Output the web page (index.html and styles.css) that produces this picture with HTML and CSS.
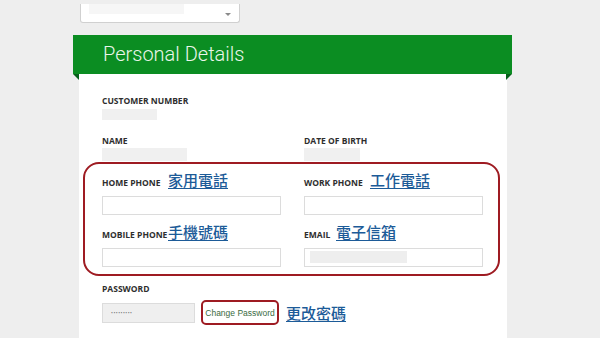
FILE: index.html
```html
<!DOCTYPE html>
<html lang="zh-Hant">
<head>
    <meta charset="UTF-8">
    <title>Personal Details</title>
    <link rel="stylesheet" href="styles.css">
</head>
<body>
    <div class="page">
        <div class="select"><span class="select-fill"></span></div>

        <div class="banner">
            <h1 class="banner-title">Personal Details</h1>
        </div>

        <div class="card">
            <div class="field">
                <div class="label">CUSTOMER NUMBER</div>
                <div class="blank blank-short"></div>
            </div>

            <div class="pair">
                <div class="field">
                    <div class="label">NAME</div>
                    <div class="blank blank-name"></div>
                </div>
                <div class="field">
                    <div class="label">DATE OF BIRTH</div>
                    <div class="blank blank-dob"></div>
                </div>
            </div>

            <!-- annotated block -->
            <div class="mark-box">
                <div class="pair">
                    <div class="field">
                        <div class="label-row">
                            <span class="label label-wide">HOME PHONE</span>
                            <a class="note" href="#">家用電話</a>
                        </div>
                        <div class="input"></div>
                    </div>
                    <div class="field">
                        <div class="label-row">
                            <span class="label label-wide">WORK PHONE</span>
                            <a class="note" href="#">工作電話</a>
                        </div>
                        <div class="input"></div>
                    </div>
                </div>
                <div class="pair pair-second">
                    <div class="field">
                        <div class="label-row">
                            <span class="label label-wide">MOBILE PHONE</span>
                            <a class="note" href="#">手機號碼</a>
                        </div>
                        <div class="input"></div>
                    </div>
                    <div class="field">
                        <div class="label-row">
                            <span class="label label-email">EMAIL</span>
                            <a class="note" href="#">電子信箱</a>
                        </div>
                        <div class="input"><span class="input-fill"></span></div>
                    </div>
                </div>
            </div>

            <div class="field field-password">
                <div class="label">PASSWORD</div>
                <div class="password-row">
                    <div class="input input-password">•••••••••</div>
                    <button class="change-btn">Change Password</button>
                    <a class="note" href="#">更改密碼</a>
                </div>
            </div>
        </div>
    </div>
</body>
</html>
```

FILE: styles.css
```css
body {
    margin: 0;
    background: #eeeeee;
    font-family: "Open Sans", "Liberation Sans", sans-serif;
    color: #333;
}

.page {
    width: 439px;
    padding-left: 73px;
}

.select {
    position: relative;
    width: 158px;
    height: 18px;
    margin-left: 7px;
    background: #fff;
    border: 1px solid #d0d0d0;
    border-top: none;
    border-radius: 0 0 3px 3px;
}

.select-fill {
    display: block;
    width: 95px;
    height: 10px;
    margin: 4px 0 0 8px;
    background: #f6f6f6;
}

.select::after {
    content: "";
    position: absolute;
    right: 8px;
    top: 9px;
    border-left: 3px solid transparent;
    border-right: 3px solid transparent;
    border-top: 3px solid #8a8a8a;
}

.banner {
    position: relative;
    height: 39px;
    margin-top: 12px;
    padding-left: 30px;
    background: #0b8d22;
}

/* folded corners under the ribbon */
.banner::before,
.banner::after {
    content: "";
    position: absolute;
    bottom: -6px;
    border-top: 6px solid #06601a;
}

.banner::before {
    left: 0;
    border-left: 6px solid transparent;
}

.banner::after {
    right: 0;
    border-right: 6px solid transparent;
}

.banner-title {
    margin: 0;
    font-family: Roboto, "Liberation Sans", sans-serif;
    font-weight: 300;
    font-size: 20px;
    line-height: 39px;
    color: #eaf6ea;
}

.card {
    margin: 0 5px 0 6px;
    padding: 21px 0 20px 23px;
    background: #fff;
}

.label {
    font-weight: 700;
    font-size: 8.5px;
    line-height: 12px;
    color: #2e2e2e;
}

.blank {
    background: #f0f0f0;
}

.blank-short {
    width: 55px;
    height: 11px;
    margin-top: 2px;
}

.pair {
    display: grid;
    grid-template-columns: 202px 202px;
}

.pair > .field > .label {
    margin-top: 15px;
}

.blank-name {
    width: 85px;
    height: 13px;
    margin-top: 1px;
}

.blank-dob {
    width: 56px;
    height: 13px;
    margin-top: 1px;
}

.mark-box {
    margin: 1px 7px 0 -19px;
    padding: 7px 0 7px 17px;
    border: 2px solid #9e1b22;
    border-radius: 16px;
}

.mark-box .pair {
    grid-template-columns: 202px 190px;
}

.label-row {
    display: flex;
    align-items: baseline;
    height: 21px;
}

.label-wide {
    width: 66px;
    flex-shrink: 0;
}

.label-email {
    width: 32px;
}

.note {
    font-family: "Noto Sans CJK TC", sans-serif;
    font-weight: 500;
    font-size: 15px;
    line-height: 18px;
    color: #1c5b98;
    text-decoration: underline;
    text-decoration-thickness: 1px;
    text-underline-offset: 2px;
}

.input {
    box-sizing: border-box;
    width: 179px;
    height: 19px;
    margin-top: 4px;
    border: 1px solid #dcdcdc;
    background: #fff;
}

.input-fill {
    display: block;
    width: 97px;
    height: 12px;
    margin: 2px 0 0 5px;
    background: #eeeeee;
}

.pair-second {
    margin-top: 8px;
}

.field-password {
    margin-top: 7px;
}

.password-row {
    display: flex;
    align-items: center;
    margin-top: 5px;
}

.input-password {
    width: 93px;
    height: 20px;
    margin-top: 0;
    padding-left: 8px;
    background: #efefef;
    font-size: 5px;
    line-height: 18px;
    letter-spacing: 0.5px;
    color: #777;
}

.change-btn {
    box-sizing: border-box;
    width: 78px;
    height: 25px;
    margin: 0 7px 0 6px;
    padding: 0;
    background: #fff;
    border: 2px solid #9e1b22;
    border-radius: 5px;
    font-family: "Liberation Sans", Arial, sans-serif;
    font-size: 8.5px;
    color: #3a6b42;
}
```
